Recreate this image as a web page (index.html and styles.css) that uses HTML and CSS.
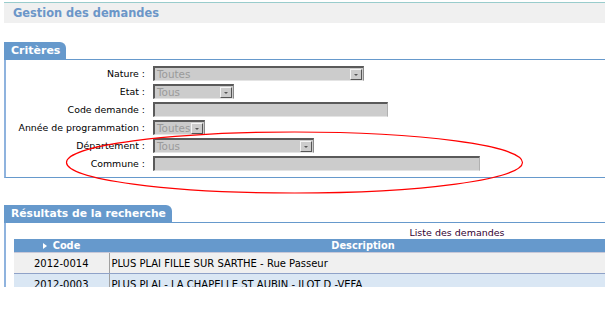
FILE: index.html
```html
<!DOCTYPE html>
<html>
<head>
    <title>Gestion des demandes</title>
    <link rel="stylesheet" href="styles.css">
</head>
<body>
    <div class="page">
        <div class="page-title">Gestion des demandes</div>

        <div class="section criteria">
            <div class="tab-row"><span class="tab">Critères</span></div>
            <div class="section-body">
                <div class="form-grid">
                    <label>Nature :</label>
                    <div class="field select f-nature"><span>Toutes</span><i class="arrow"></i></div>

                    <label>Etat :</label>
                    <div class="field select f-etat"><span>Tous</span><i class="arrow"></i></div>

                    <label>Code demande :</label>
                    <div class="field text f-code"></div>

                    <label>Année de programmation :</label>
                    <div class="field select f-annee"><span>Toutes</span><i class="arrow"></i></div>

                    <label>Département :</label>
                    <div class="field select f-dept"><span>Tous</span><i class="arrow"></i></div>

                    <label>Commune :</label>
                    <div class="field text f-commune"></div>
                </div>
            </div>
        </div>

        <div class="section results">
            <div class="tab-row"><span class="tab">Résultats de la recherche</span></div>
            <div class="section-body">
                <table class="results-table">
                    <caption>Liste des demandes</caption>
                    <thead>
                        <tr>
                            <th class="col-code"><span class="sort"></span>Code</th>
                            <th class="col-desc">Description</th>
                            <th class="col-more"></th>
                        </tr>
                    </thead>
                    <tbody>
                        <tr class="odd">
                            <td class="code">2012-0014</td>
                            <td>PLUS PLAI FILLE SUR SARTHE - Rue Passeur</td>
                            <td></td>
                        </tr>
                        <tr class="even">
                            <td class="code">2012-0003</td>
                            <td>PLUS PLAI - LA CHAPELLE ST AUBIN - ILOT D -VEFA</td>
                            <td></td>
                        </tr>
                    </tbody>
                </table>
            </div>
        </div>

        <!-- annotation drawn over the form -->
        <svg class="annotation" width="605" height="287" viewBox="0 0 605 287">
            <ellipse cx="294.5" cy="162.5" rx="228" ry="30.5" fill="none" stroke="#ff0000" stroke-width="1.2"/>
        </svg>
    </div>
</body>
</html>
```

FILE: styles.css
```css
body {
    margin: 0;
    background-color: #ffffff;
    font-family: "DejaVu Sans", Verdana, sans-serif;
    font-size: 9.4px;
    color: #000000;
}

.page {
    position: relative;
    width: 605px;
    height: 287px;
    overflow: hidden;
}

.page-title {
    margin: 2px 0 0 4px;
    height: 20px;
    line-height: 20px;
    padding-left: 9px;
    border-top: 1px solid #99cccc;
    background-color: #f0f0f0;
    color: #6b96c8;
    font-size: 11.4px;
    font-weight: bold;
}

.section {
    margin-left: 4px;
}

.criteria {
    margin-top: 19px;
}

.results {
    margin-top: 27px;
}

.tab-row {
    height: 17px;
    border-bottom: 1px solid #6699cc;
}

.tab {
    display: inline-block;
    height: 17px;
    line-height: 18px;
    padding: 0 6px 0 7px;
    background-color: #6699cc;
    border-top-right-radius: 6px;
    color: #ffffff;
    font-size: 11px;
    font-weight: bold;
}

.results .tab {
    font-size: 10.75px;
}

.section-body {
    border-left: 2px solid #8fb3de;
}

.criteria .section-body {
    padding: 6px 0 6px 0;
    border-bottom: 1px solid #6699cc;
}

.form-grid {
    display: grid;
    grid-template-columns: 139px auto;
    column-gap: 8px;
    row-gap: 3px;
    align-items: center;
}

.form-grid label {
    text-align: right;
    white-space: nowrap;
}

.field {
    box-sizing: border-box;
    height: 15px;
    display: flex;
    align-items: center;
    justify-content: space-between;
    background-color: #cccccc;
    border-top: 2px solid #5a5a5a;
    border-left: 2px solid #5a5a5a;
    border-right: 1px solid #8a8a8a;
    border-bottom: 1px solid #e4e4e4;
    color: #9a9a9a;
    font-size: 10.4px;
}

.field span {
    padding-left: 2px;
}

.field .arrow {
    box-sizing: border-box;
    width: 12px;
    height: 11px;
    margin-right: 1px;
    background-color: #cccccc;
    border-top: 1px solid #f4f4f4;
    border-left: 1px solid #f4f4f4;
    border-right: 1px solid #555555;
    border-bottom: 1px solid #555555;
    position: relative;
}

.field .arrow::after {
    content: "";
    position: absolute;
    left: 3px;
    top: 4px;
    border-left: 2px solid transparent;
    border-right: 2px solid transparent;
    border-top: 2px solid #555555;
}

.field.text {
    border-right-color: #b0b0b0;
}

.f-nature { width: 211px; }
.f-etat { width: 81px; }
.f-code { width: 235px; }
.f-annee { width: 52px; }
.f-dept { width: 161px; }
.f-commune { width: 327px; }

.results .section-body {
    height: 80px;
    padding: 2px 0 0 8px;
}

.results-table {
    width: 886px;
    border-collapse: collapse;
    font-size: 10px;
}

.results-table caption {
    height: 14px;
    line-height: 16px;
    text-align: center;
    color: #330033;
    font-size: 9.5px;
}

.results-table th {
    height: 13px;
    padding: 0;
    line-height: 13px;
    background-color: #6699cc;
    color: #ffffff;
    font-size: 9.8px;
    font-weight: bold;
    text-align: center;
    border-bottom: 1px solid #c8c8d8;
}

.results-table .col-code {
    width: 95px;
}

.results-table .col-desc {
    width: 508px;
}

.sort {
    display: inline-block;
    margin-right: 6px;
    border-top: 3px solid transparent;
    border-bottom: 3px solid transparent;
    border-left: 4px solid #ffffff;
}

.results-table td {
    height: 20px;
    padding: 0 0 0 2px;
    border-right: 1px solid #a0a0a0;
    border-bottom: 1px solid #8fa2c8;
    white-space: nowrap;
}

.results-table td.code {
    text-align: center;
    padding: 0;
}

.results-table tr.odd td {
    background-color: #f0f0f0;
}

.results-table tr.even td {
    background-color: #dae6f2;
    background-image: repeating-conic-gradient(#cddff0 0 25%, #e6eef8 0 50%);
    background-size: 2px 2px;
}

.annotation {
    position: absolute;
    left: 0;
    top: 0;
    pointer-events: none;
}
```
